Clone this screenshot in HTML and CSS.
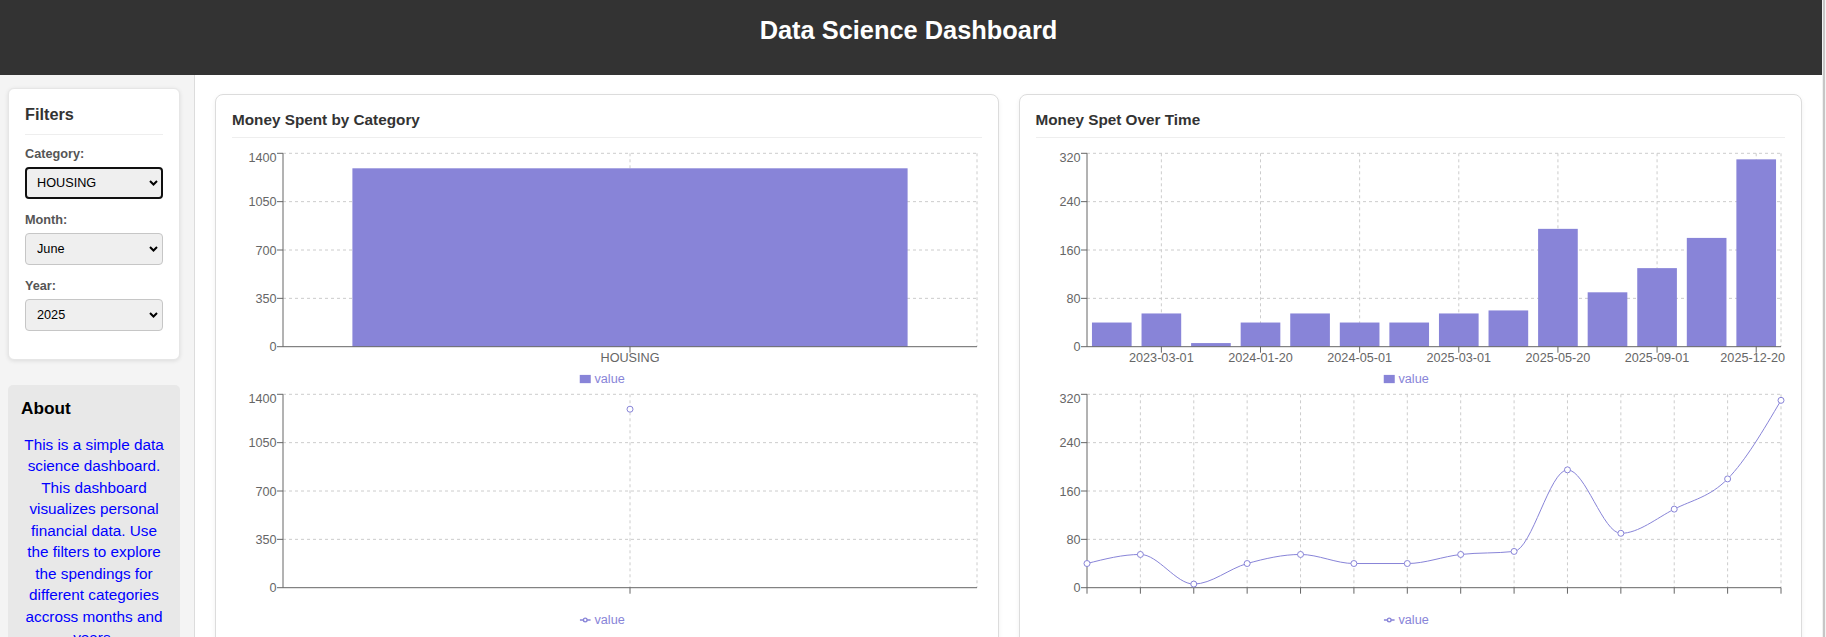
FILE: index.html
```html
<!DOCTYPE html>
<html lang="en">
<head>
<meta charset="utf-8">
<title>Data Science Dashboard</title>
<link rel="stylesheet" href="styles.css">
</head>
<body>
<div class="app">
  <header class="header">
    <h1 class="header-title">Data Science Dashboard</h1>
  </header>
  <div class="layout">
    <aside class="sidebar">
      <section class="filters">
        <h2 class="filters-title">Filters</h2>
        <div class="field">
          <label class="field-label" for="category">Category:</label>
          <div class="select-wrap">
            <select id="category" class="select is-focused">
              <option selected>HOUSING</option>
              <option>FOOD</option>
              <option>TRANSPORT</option>
            </select>
            <svg class="chevron" width="9" height="7" viewBox="0 0 9 7"><path d="M1 1.5 4.5 5 8 1.5"/></svg>
          </div>
        </div>
        <div class="field">
          <label class="field-label" for="month">Month:</label>
          <div class="select-wrap">
            <select id="month" class="select">
              <option>May</option>
              <option selected>June</option>
              <option>July</option>
            </select>
            <svg class="chevron" width="9" height="7" viewBox="0 0 9 7"><path d="M1 1.5 4.5 5 8 1.5"/></svg>
          </div>
        </div>
        <div class="field">
          <label class="field-label" for="year">Year:</label>
          <div class="select-wrap">
            <select id="year" class="select">
              <option>2024</option>
              <option selected>2025</option>
            </select>
            <svg class="chevron" width="9" height="7" viewBox="0 0 9 7"><path d="M1 1.5 4.5 5 8 1.5"/></svg>
          </div>
        </div>
      </section>
      <section class="about">
        <h3 class="about-title">About</h3>
        <p class="about-text">This is a simple data science dashboard. This dashboard visualizes personal financial data. Use the filters to explore the spendings for different categories accross months and years.</p>
      </section>
    </aside>

    <main class="main">
      <section class="card">
        <h2 class="card-title">Money Spent by Category</h2>
        <svg class="chart">
          <g class="grid">
            <line x1="51" y1="5.3" x2="745" y2="5.3"/>
            <line x1="51" y1="53.65" x2="745" y2="53.65"/>
            <line x1="51" y1="102" x2="745" y2="102"/>
            <line x1="51" y1="150.35" x2="745" y2="150.35"/>
            <line x1="398" y1="5.3" x2="398" y2="198.7"/>
            <line x1="745" y1="5.3" x2="745" y2="198.7"/>
          </g>
          <rect class="bar" x="120.4" y="20.3" width="555.2" height="178.4"/>
          <g class="axis">
            <line x1="51" y1="5.3" x2="51" y2="198.7"/>
            <line x1="45" y1="5.3" x2="51" y2="5.3"/>
            <line x1="45" y1="53.65" x2="51" y2="53.65"/>
            <line x1="45" y1="102" x2="51" y2="102"/>
            <line x1="45" y1="150.35" x2="51" y2="150.35"/>
            <line x1="45" y1="198.7" x2="51" y2="198.7"/>
            <line x1="51" y1="198.7" x2="745" y2="198.7"/>
            <line x1="398" y1="198.7" x2="398" y2="204.7"/>
          </g>
          <g class="tick y-tick">
            <text x="44.5" y="14">1400</text>
            <text x="44.5" y="58.25">1050</text>
            <text x="44.5" y="106.6">700</text>
            <text x="44.5" y="154.95">350</text>
            <text x="44.5" y="203.3">0</text>
          </g>
          <g class="tick x-tick">
            <text x="398" y="213.5">HOUSING</text>
          </g>
          <rect class="legend-rect" x="347.75" y="226.9" width="11" height="8.25"/>
          <text class="legend-text" x="362.5" y="234.5">value</text>
        </svg>
        <svg class="chart">
          <g class="grid">
            <line x1="51" y1="5.3" x2="745" y2="5.3"/>
            <line x1="51" y1="53.65" x2="745" y2="53.65"/>
            <line x1="51" y1="102" x2="745" y2="102"/>
            <line x1="51" y1="150.35" x2="745" y2="150.35"/>
            <line x1="398" y1="5.3" x2="398" y2="198.7"/>
            <line x1="745" y1="5.3" x2="745" y2="198.7"/>
          </g>
          <g class="axis">
            <line x1="51" y1="5.3" x2="51" y2="198.7"/>
            <line x1="45" y1="5.3" x2="51" y2="5.3"/>
            <line x1="45" y1="53.65" x2="51" y2="53.65"/>
            <line x1="45" y1="102" x2="51" y2="102"/>
            <line x1="45" y1="150.35" x2="51" y2="150.35"/>
            <line x1="45" y1="198.7" x2="51" y2="198.7"/>
            <line x1="51" y1="198.7" x2="745" y2="198.7"/>
            <line x1="398" y1="198.7" x2="398" y2="204.7"/>
          </g>
          <g class="tick y-tick">
            <text x="44.5" y="14">1400</text>
            <text x="44.5" y="58.25">1050</text>
            <text x="44.5" y="106.6">700</text>
            <text x="44.5" y="154.95">350</text>
            <text x="44.5" y="203.3">0</text>
          </g>
          <circle class="dot" cx="398" cy="20.2" r="3"/>
          <svg x="347.75" y="225.5" width="11" height="11" viewBox="0 0 32 32"><path class="legend-line" d="M0,16h10.667A5.333,5.333,0,1,1,21.333,16H32M21.333,16A5.333,5.333,0,1,1,10.667,16"/></svg>
          <text class="legend-text" x="362.5" y="234.5">value</text>
        </svg>
      </section>

      <section class="card">
        <h2 class="card-title">Money Spet Over Time</h2>
        <svg class="chart">
          <g class="grid">
            <line x1="51" y1="5.3" x2="745" y2="5.3"/>
            <line x1="51" y1="53.65" x2="745" y2="53.65"/>
            <line x1="51" y1="102" x2="745" y2="102"/>
            <line x1="51" y1="150.35" x2="745" y2="150.35"/>
            <line x1="125.36" y1="5.3" x2="125.36" y2="198.7"/>
            <line x1="224.5" y1="5.3" x2="224.5" y2="198.7"/>
            <line x1="323.64" y1="5.3" x2="323.64" y2="198.7"/>
            <line x1="422.79" y1="5.3" x2="422.79" y2="198.7"/>
            <line x1="521.93" y1="5.3" x2="521.93" y2="198.7"/>
            <line x1="621.07" y1="5.3" x2="621.07" y2="198.7"/>
            <line x1="720.21" y1="5.3" x2="720.21" y2="198.7"/>
            <line x1="745" y1="5.3" x2="745" y2="198.7"/>
          </g>
          <g class="bar">
            <rect x="55.96" y="174.53" width="39.66" height="24.17"/>
            <rect x="105.53" y="165.46" width="39.66" height="33.24"/>
            <rect x="155.1" y="195.07" width="39.66" height="3.63"/>
            <rect x="204.67" y="174.53" width="39.66" height="24.17"/>
            <rect x="254.24" y="165.46" width="39.66" height="33.24"/>
            <rect x="303.81" y="174.53" width="39.66" height="24.17"/>
            <rect x="353.38" y="174.53" width="39.66" height="24.17"/>
            <rect x="402.96" y="165.46" width="39.66" height="33.24"/>
            <rect x="452.53" y="162.44" width="39.66" height="36.26"/>
            <rect x="502.1" y="80.85" width="39.66" height="117.85"/>
            <rect x="551.67" y="144.31" width="39.66" height="54.39"/>
            <rect x="601.24" y="120.13" width="39.66" height="78.57"/>
            <rect x="650.81" y="89.91" width="39.66" height="108.79"/>
            <rect x="700.38" y="11.34" width="39.66" height="187.36"/>
          </g>
          <g class="axis">
            <line x1="51" y1="5.3" x2="51" y2="198.7"/>
            <line x1="45" y1="5.3" x2="51" y2="5.3"/>
            <line x1="45" y1="53.65" x2="51" y2="53.65"/>
            <line x1="45" y1="102" x2="51" y2="102"/>
            <line x1="45" y1="150.35" x2="51" y2="150.35"/>
            <line x1="45" y1="198.7" x2="51" y2="198.7"/>
            <line x1="51" y1="198.7" x2="745" y2="198.7"/>
            <line x1="125.36" y1="198.7" x2="125.36" y2="204.7"/>
            <line x1="224.5" y1="198.7" x2="224.5" y2="204.7"/>
            <line x1="323.64" y1="198.7" x2="323.64" y2="204.7"/>
            <line x1="422.79" y1="198.7" x2="422.79" y2="204.7"/>
            <line x1="521.93" y1="198.7" x2="521.93" y2="204.7"/>
            <line x1="621.07" y1="198.7" x2="621.07" y2="204.7"/>
            <line x1="720.21" y1="198.7" x2="720.21" y2="204.7"/>
          </g>
          <g class="tick y-tick">
            <text x="44.5" y="14">320</text>
            <text x="44.5" y="58.25">240</text>
            <text x="44.5" y="106.6">160</text>
            <text x="44.5" y="154.95">80</text>
            <text x="44.5" y="203.3">0</text>
          </g>
          <g class="tick x-tick">
            <text x="125.36" y="213.5">2023-03-01</text>
            <text x="224.5" y="213.5">2024-01-20</text>
            <text x="323.64" y="213.5">2024-05-01</text>
            <text x="422.79" y="213.5">2025-03-01</text>
            <text x="521.93" y="213.5">2025-05-20</text>
            <text x="621.07" y="213.5">2025-09-01</text>
            <text class="x-tick-end" x="749" y="213.5">2025-12-20</text>
          </g>
          <rect class="legend-rect" x="347.75" y="226.9" width="11" height="8.25"/>
          <text class="legend-text" x="362.5" y="234.5">value</text>
        </svg>
        <svg class="chart">
          <g class="grid">
            <line x1="51" y1="5.3" x2="745" y2="5.3"/>
            <line x1="51" y1="53.65" x2="745" y2="53.65"/>
            <line x1="51" y1="102" x2="745" y2="102"/>
            <line x1="51" y1="150.35" x2="745" y2="150.35"/>
            <line x1="104.38" y1="5.3" x2="104.38" y2="198.7"/>
            <line x1="157.77" y1="5.3" x2="157.77" y2="198.7"/>
            <line x1="211.15" y1="5.3" x2="211.15" y2="198.7"/>
            <line x1="264.54" y1="5.3" x2="264.54" y2="198.7"/>
            <line x1="317.92" y1="5.3" x2="317.92" y2="198.7"/>
            <line x1="371.31" y1="5.3" x2="371.31" y2="198.7"/>
            <line x1="424.69" y1="5.3" x2="424.69" y2="198.7"/>
            <line x1="478.08" y1="5.3" x2="478.08" y2="198.7"/>
            <line x1="531.46" y1="5.3" x2="531.46" y2="198.7"/>
            <line x1="584.85" y1="5.3" x2="584.85" y2="198.7"/>
            <line x1="638.23" y1="5.3" x2="638.23" y2="198.7"/>
            <line x1="691.62" y1="5.3" x2="691.62" y2="198.7"/>
            <line x1="745" y1="5.3" x2="745" y2="198.7"/>
          </g>
          <g class="axis">
            <line x1="51" y1="5.3" x2="51" y2="198.7"/>
            <line x1="45" y1="5.3" x2="51" y2="5.3"/>
            <line x1="45" y1="53.65" x2="51" y2="53.65"/>
            <line x1="45" y1="102" x2="51" y2="102"/>
            <line x1="45" y1="150.35" x2="51" y2="150.35"/>
            <line x1="45" y1="198.7" x2="51" y2="198.7"/>
            <line x1="51" y1="198.7" x2="745" y2="198.7"/>
            <line x1="51" y1="198.7" x2="51" y2="204.7"/>
            <line x1="104.38" y1="198.7" x2="104.38" y2="204.7"/>
            <line x1="157.77" y1="198.7" x2="157.77" y2="204.7"/>
            <line x1="211.15" y1="198.7" x2="211.15" y2="204.7"/>
            <line x1="264.54" y1="198.7" x2="264.54" y2="204.7"/>
            <line x1="317.92" y1="198.7" x2="317.92" y2="204.7"/>
            <line x1="371.31" y1="198.7" x2="371.31" y2="204.7"/>
            <line x1="424.69" y1="198.7" x2="424.69" y2="204.7"/>
            <line x1="478.08" y1="198.7" x2="478.08" y2="204.7"/>
            <line x1="531.46" y1="198.7" x2="531.46" y2="204.7"/>
            <line x1="584.85" y1="198.7" x2="584.85" y2="204.7"/>
            <line x1="638.23" y1="198.7" x2="638.23" y2="204.7"/>
            <line x1="691.62" y1="198.7" x2="691.62" y2="204.7"/>
            <line x1="745" y1="198.7" x2="745" y2="204.7"/>
          </g>
          <g class="tick y-tick">
            <text x="44.5" y="14">320</text>
            <text x="44.5" y="58.25">240</text>
            <text x="44.5" y="106.6">160</text>
            <text x="44.5" y="154.95">80</text>
            <text x="44.5" y="203.3">0</text>
          </g>
          <path class="series" d="M51,174.53C68.79,169.99,86.59,165.46,104.38,165.46C122.18,165.46,139.97,195.07,157.77,195.07C175.56,195.07,193.36,179.46,211.15,174.53C228.95,169.59,246.74,165.46,264.54,165.46C282.33,165.46,300.13,174.53,317.92,174.53C335.72,174.53,353.51,174.53,371.31,174.53C389.1,174.53,406.9,167.47,424.69,165.46C442.49,163.44,460.28,164.45,478.08,162.44C495.87,160.42,513.67,80.85,531.46,80.85C549.26,80.85,567.05,144.31,584.85,144.31C602.64,144.31,620.44,129.2,638.23,120.13C656.03,111.07,673.82,108.04,691.62,89.91C709.41,71.78,727.21,41.56,745,11.34"/>
          <g>
            <circle class="dot" cx="51" cy="174.53" r="3"/>
            <circle class="dot" cx="104.38" cy="165.46" r="3"/>
            <circle class="dot" cx="157.77" cy="195.07" r="3"/>
            <circle class="dot" cx="211.15" cy="174.53" r="3"/>
            <circle class="dot" cx="264.54" cy="165.46" r="3"/>
            <circle class="dot" cx="317.92" cy="174.53" r="3"/>
            <circle class="dot" cx="371.31" cy="174.53" r="3"/>
            <circle class="dot" cx="424.69" cy="165.46" r="3"/>
            <circle class="dot" cx="478.08" cy="162.44" r="3"/>
            <circle class="dot" cx="531.46" cy="80.85" r="3"/>
            <circle class="dot" cx="584.85" cy="144.31" r="3"/>
            <circle class="dot" cx="638.23" cy="120.13" r="3"/>
            <circle class="dot" cx="691.62" cy="89.91" r="3"/>
            <circle class="dot" cx="745" cy="11.34" r="3"/>
          </g>
          <svg x="347.75" y="225.5" width="11" height="11" viewBox="0 0 32 32"><path class="legend-line" d="M0,16h10.667A5.333,5.333,0,1,1,21.333,16H32M21.333,16A5.333,5.333,0,1,1,10.667,16"/></svg>
          <text class="legend-text" x="362.5" y="234.5">value</text>
        </svg>
      </section>
    </main>
  </div>
</div>
</body>
</html>
```

FILE: styles.css
```css
html {
  overflow: hidden;
}

body {
  margin: 0;
  display: flex;
  min-height: 100vh;
  background: #fff;
  font-family: "Liberation Sans", Arial, sans-serif;
}

/* thin scrollbar track at the right edge */
body::after {
  content: "";
  flex: 0 0 4px;
  background: linear-gradient(to right, #f1f1f1 0 1px, #c6c6c6 1px 3px, #f3f3f3 3px);
}

.app {
  flex: 1;
  min-width: 0;
  display: flex;
  flex-direction: column;
}

.header {
  background: #333;
  color: #fff;
  height: 75px;
  box-sizing: border-box;
  padding: 16.3px 5px 0 0;
  text-align: center;
}

.header-title {
  margin: 0;
  font-size: 25.4px;
  font-weight: bold;
}

.layout {
  flex: 1;
  display: flex;
}

.sidebar {
  flex: none;
  width: 195px;
  box-sizing: border-box;
  background: #f4f4f4;
  border-right: 1px solid #dcdcdc;
  padding: 13px 14px 0 8px;
}

.filters {
  background: #fff;
  border: 1px solid #e6e6e6;
  border-radius: 6px;
  box-shadow: 0 1px 4px rgba(0, 0, 0, 0.1);
  padding: 16px 16px 13.5px;
}

.filters-title {
  margin: 0 0 12px;
  padding-bottom: 10px;
  border-bottom: 1px solid #eee;
  font-size: 16.3px;
  color: #333;
}

.field {
  margin-bottom: 14px;
}

.field-label {
  display: block;
  margin-bottom: 6px;
  font-size: 12.7px;
  font-weight: bold;
  color: #555;
}

.select-wrap {
  position: relative;
}

.select {
  -webkit-appearance: none;
  appearance: none;
  display: block;
  width: 100%;
  height: 32px;
  box-sizing: border-box;
  margin: 0;
  border: 1px solid #c6c6c6;
  border-radius: 4px;
  background: #efefef;
  padding: 0 20px 0 11px;
  font-family: "Liberation Sans", Arial, sans-serif;
  font-size: 12.7px;
  color: #000;
}

.select.is-focused {
  border: 2px solid #101010;
  padding-left: 10px;
}

.chevron {
  position: absolute;
  right: 5px;
  top: 50%;
  transform: translateY(-50%);
  pointer-events: none;
}

.chevron path {
  fill: none;
  stroke: #000;
  stroke-width: 2;
}

.about {
  margin-top: 25.5px;
  background: #e8e8e8;
  border-radius: 5px;
  padding: 13px;
}

.about-title {
  margin: 0 0 14.5px;
  font-size: 17.2px;
  color: #000;
}

.about-text {
  margin: 0;
  text-align: center;
  color: #0000ff;
  font-size: 15.3px;
  line-height: 21.5px;
}

.main {
  flex: 1;
  min-width: 0;
  padding: 19px 20px 0;
  display: grid;
  grid-template-columns: 1fr 1fr;
  gap: 20px;
  align-items: start;
}

.card {
  background: #fff;
  border: 1px solid #dcdcdc;
  border-radius: 8px;
  box-shadow: 0 2px 5px rgba(0, 0, 0, 0.06);
  padding: 16px;
  min-width: 0;
}

.card-title {
  margin: 0 0 10px;
  padding-bottom: 8px;
  border-bottom: 1px solid #eee;
  font-size: 15.3px;
  color: #333;
}

.chart {
  display: block;
  width: 100%;
  height: 240.5px;
  overflow: visible;
  font-family: "Liberation Sans", Arial, sans-serif;
}

.grid line {
  stroke: #ccc;
  stroke-dasharray: 3 3;
}

.axis line {
  stroke: #666;
}

.tick {
  fill: #666;
  font-size: 12.65px;
}

.y-tick {
  text-anchor: end;
}

.x-tick {
  text-anchor: middle;
}

.x-tick .x-tick-end {
  text-anchor: end;
}

.bar {
  fill: #8884d8;
}

.series {
  fill: none;
  stroke: #8884d8;
  stroke-width: 1;
}

.dot {
  fill: #fff;
  stroke: #8884d8;
  stroke-width: 1;
}

.legend-rect {
  fill: #8884d8;
}

.legend-line {
  fill: none;
  stroke: #8884d8;
  stroke-width: 4;
}

.legend-text {
  fill: #8884d8;
  font-size: 12.65px;
}
```
